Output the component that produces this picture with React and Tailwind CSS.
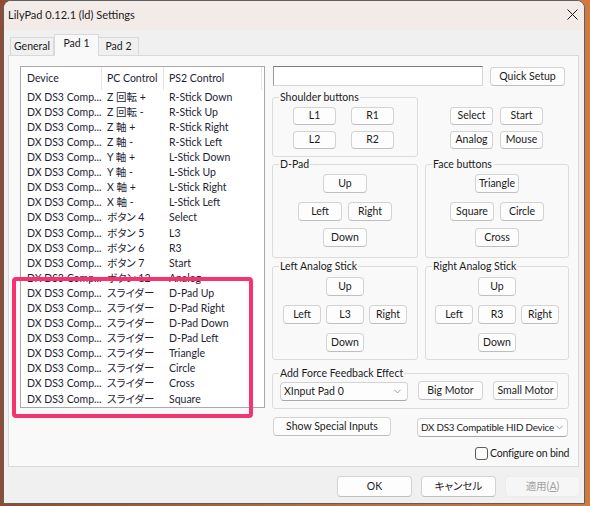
import React from 'react';
import { ChevronDown } from 'lucide-react';

const font = "font-['Lato','Noto_Sans_CJK_JP',sans-serif] [font-feature-settings:'palt']";
const btn =
  'flex items-center justify-center shrink-0 rounded-[4px] border border-[#d3d3d3] border-b-[#bebebe] bg-[#fdfdfd] text-[#1b1b1b]';

const rows = [
  ['Z 回転 +', 'R-Stick Down'],
  ['Z 回転 -', 'R-Stick Up'],
  ['Z 軸 +', 'R-Stick Right'],
  ['Z 軸 -', 'R-Stick Left'],
  ['Y 軸 +', 'L-Stick Down'],
  ['Y 軸 -', 'L-Stick Up'],
  ['X 軸 +', 'L-Stick Right'],
  ['X 軸 -', 'L-Stick Left'],
  ['ボタン 4', 'Select'],
  ['ボタン 5', 'L3'],
  ['ボタン 6', 'R3'],
  ['ボタン 7', 'Start'],
  ['ボタン 12', 'Analog'],
  ['スライダー', 'D-Pad Up'],
  ['スライダー', 'D-Pad Right'],
  ['スライダー', 'D-Pad Down'],
  ['スライダー', 'D-Pad Left'],
  ['スライダー', 'Triangle'],
  ['スライダー', 'Circle'],
  ['スライダー', 'Cross'],
  ['スライダー', 'Square'],
];

function Btn({ className = '', children }) {
  return <div className={`${btn} ${className}`}>{children}</div>;
}

function Group({ label, className = '', children }) {
  return (
    <fieldset className={`shrink-0 border border-[#dcdcdc] rounded-[3px] ${className}`}>
      <legend className="ml-[6px] px-[1px] leading-[14px]">{label}</legend>
      {children}
    </fieldset>
  );
}

function Combo({ className = '', children }) {
  return (
    <div
      className={`flex items-center justify-between shrink-0 rounded-[4px] border border-[#d3d3d3] border-b-[#a8a8a8] bg-[#fdfdfd] pl-[3px] pr-[4px] ${className}`}
    >
      <span className="whitespace-nowrap">{children}</span>
      <ChevronDown size={11} strokeWidth={1.3} className="shrink-0 text-[#5f5f5f]" />
    </div>
  );
}

function DeviceList() {
  return (
    <div className="w-[245px] h-[342px] shrink-0 border border-[#a9a9a9] bg-white text-[#1e1e34] overflow-hidden">
      <div className="flex h-[23px] items-center">
        <div className="w-[81px] h-full flex items-center pl-[6px] border-r border-[#e5e5e5]">Device</div>
        <div className="w-[62px] h-full flex items-center pl-[5px] border-r border-[#e5e5e5]">PC Control</div>
        <div className="w-[98px] h-full flex items-center pl-[5px] border-r border-[#e5e5e5]">PS2 Control</div>
      </div>
      {rows.map(([pc, ps2], i) => (
        <div key={i} className="flex h-[15.1px] items-center whitespace-nowrap">
          <div className="w-[81px] pl-[6px]">DX DS3 Comp...</div>
          <div className="w-[62px] pl-[5px] overflow-hidden">{pc}</div>
          <div className="flex-1 pl-[5px]">{ps2}</div>
        </div>
      ))}
    </div>
  );
}

function StickButtons({ center }) {
  return (
    <div className="flex flex-col items-center">
      <Btn className="mt-[4px] w-[38px] h-[19px]">Up</Btn>
      <div className="mt-[9px] flex gap-[5px]">
        <Btn className="w-[38px] h-[19px]">Left</Btn>
        <Btn className="w-[38px] h-[19px]">{center}</Btn>
        <Btn className="w-[38px] h-[19px]">Right</Btn>
      </div>
      <Btn className="mt-[9px] w-[38px] h-[19px]">Down</Btn>
    </div>
  );
}

function PadButtons({ top, left, right, bottom }) {
  return (
    <div className="flex flex-col items-center">
      <Btn className="mt-[3px] w-[44px] h-[19px]">{top}</Btn>
      <div className="mt-[9px] flex gap-[6px]">
        <Btn className="w-[44px] h-[19px]">{left}</Btn>
        <Btn className="w-[44px] h-[19px]">{right}</Btn>
      </div>
      <Btn className="mt-[7px] w-[44px] h-[19px]">{bottom}</Btn>
    </div>
  );
}

export default function App() {
  return (
    <div className={`relative w-[590px] h-[506px] overflow-hidden bg-linear-to-r from-[#8d4c33] via-[#b06a45] to-[#cf7a40] text-[10.5px] text-[#1b1b1b] ${font}`}>
      <div className="ml-[3px] w-[582px] h-[504px] flex flex-col border border-[#5e5e5e] rounded-t-[8px] overflow-hidden bg-[#f0f0f0]">
        {/* title bar */}
        <div className="h-[29px] shrink-0 flex items-center justify-between pl-[4px] pr-[6px] bg-[#f3ebe8]">
          <span className="text-[11px] -mt-[1px]">LilyPad 0.12.1 (ld) Settings</span>
          <svg width="11" height="11" viewBox="0 0 11 11" className="mb-[2px]">
            <path d="M0.5 0.5 L10.5 10.5 M10.5 0.5 L0.5 10.5" stroke="#1a1a1a" strokeWidth="1" fill="none" />
          </svg>
        </div>

        <div className="flex flex-col px-[4px]">
          {/* tabs */}
          <div className="mt-[4px] h-[21px] flex items-end pl-[2px]">
            <div className="w-[44px] h-[18px] flex items-center justify-center border border-b-0 border-[#d9d9d9] bg-[#f0f0f0]">General</div>
            <div className="relative z-10 -mb-px w-[45px] h-[22px] flex items-center justify-center pb-[3px] border border-b-0 border-[#d9d9d9] bg-[#f9f9f9]">Pad 1</div>
            <div className="w-[40px] h-[18px] flex items-center justify-center border border-b-0 border-l-0 border-[#d9d9d9] bg-[#f0f0f0]">Pad 2</div>
          </div>

          {/* tab panel */}
          <div className="w-[571px] h-[412px] flex border border-[#d9d9d9] bg-[#f9f9f9] pl-[11px] pt-[10px]">
            <DeviceList />

            <div className="ml-[7px] w-[297px] flex flex-col">
              <div className="flex items-start">
                <div className="ml-[1px] w-[210px] h-[20px] border border-[#d6d6d6] border-t-[#7c7c7c] border-l-[#9a9a9a] bg-white" />
                <Btn className="mt-[1px] ml-[7px] w-[75px] h-[19px]">Quick Setup</Btn>
              </div>

              <div className="mt-[4px] flex items-start">
                <Group label="Shoulder buttons" className="w-[146px] h-[67px]">
                  <div className="mt-[3px] ml-[20px] grid grid-cols-[43px_43px] gap-x-[15px] gap-y-[6px]">
                    <Btn className="h-[18px]">L1</Btn>
                    <Btn className="h-[18px]">R1</Btn>
                    <Btn className="h-[18px]">L2</Btn>
                    <Btn className="h-[18px]">R2</Btn>
                  </div>
                </Group>
                <div className="ml-[32px] mt-[17px] grid grid-cols-[43px_43px] gap-x-[7px] gap-y-[6px]">
                  <Btn className="h-[18px]">Select</Btn>
                  <Btn className="h-[18px]">Start</Btn>
                  <Btn className="h-[18px]">Analog</Btn>
                  <Btn className="h-[18px]">Mouse</Btn>
                </div>
              </div>

              <div className="flex gap-[7px]">
                <Group label="D-Pad" className="w-[146px] h-[101px]">
                  <PadButtons top="Up" left="Left" right="Right" bottom="Down" />
                </Group>
                <Group label="Face buttons" className="w-[144px] h-[101px]">
                  <PadButtons top="Triangle" left="Square" right="Circle" bottom="Cross" />
                </Group>
              </div>

              <div className="mt-[1px] flex gap-[7px]">
                <Group label="Left Analog Stick" className="w-[146px] h-[101px]">
                  <StickButtons center="L3" />
                </Group>
                <Group label="Right Analog Stick" className="w-[144px] h-[101px]">
                  <StickButtons center="R3" />
                </Group>
              </div>

              <Group label="Add Force Feedback Effect" className="mt-[6px] w-[297px] h-[43px]">
                <div className="mt-[2px] flex items-start pl-[7px]">
                  <Combo className="w-[128px] h-[19px]">XInput Pad 0</Combo>
                  <Btn className="ml-[10px] -mt-[1px] w-[65px] h-[19px]">Big Motor</Btn>
                  <Btn className="ml-[10px] -mt-[1px] w-[65px] h-[19px]">Small Motor</Btn>
                </div>
              </Group>

              <div className="mt-[8px] flex items-start">
                <Btn className="ml-[1px] w-[118px] h-[19px]">Show Special Inputs</Btn>
                <Combo className="ml-[26px] mt-[1px] w-[151px] h-[19px] text-[9.8px] tracking-[-0.2px]">DX DS3 Compatible HID Device</Combo>
              </div>

              <div className="mt-[9px] pl-[203px] flex items-center gap-[2px] whitespace-nowrap">
                <div className="w-[13px] h-[13px] shrink-0 rounded-[3px] border border-[#5c5c5c] bg-[#fbfbfb]" />
                <span className="tracking-[-0.2px]">Configure on bind</span>
              </div>
            </div>
          </div>

          {/* dialog buttons */}
          <div className="mt-[9px] flex justify-end gap-[9px]">
            <Btn className="w-[75px] h-[21px] border-[#3b7dd0] border-b-[#2f6fc0]">OK</Btn>
            <Btn className="w-[75px] h-[21px]">キャンセル</Btn>
            <div className="w-[75px] h-[21px] flex items-center justify-center rounded-[4px] border border-[#ececec] bg-[#f6f6f6] text-[#a2a2a2]">
              適用(<span className="underline">A</span>)
            </div>
          </div>
        </div>
      </div>

      {/* highlight annotation */}
      <div className="absolute left-[12px] top-[277px] w-[241px] h-[141px] border-[4px] border-[#f7336f] rounded-[4px]" />
    </div>
  );
}
